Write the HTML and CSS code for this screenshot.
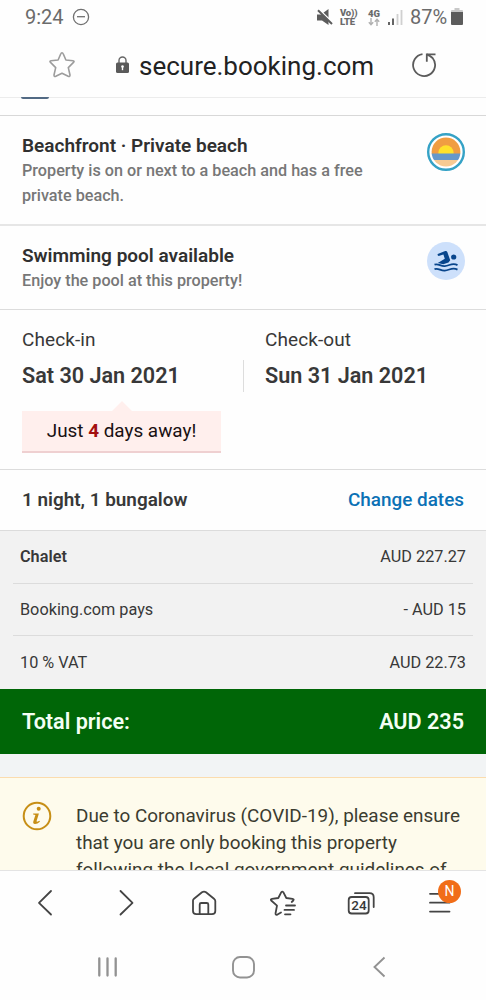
FILE: index.html
```html
<!DOCTYPE html>
<html lang="en">
<head>
<meta charset="utf-8">
<meta name="viewport" content="width=device-width">
<title>secure.booking.com</title>
<link rel="stylesheet" href="styles.css">
</head>
<body>
<div class="phone">
  <header class="status">
    <span class="clock">9:24</span>
    <svg class="dnd" width="18" height="18" viewBox="0 0 18 18" fill="none" stroke="#707070" stroke-width="1.3"><circle cx="9" cy="9" r="7.6"/><path d="M5 8.7h8"/></svg>
    <svg class="mute" width="16" height="17" viewBox="0 0 16 17" fill="#5c5c5c"><path d="M0 5.5h4L11.5 0v16L5 11.5H0z"/><path d="M2.200.6 15.800 13.600" stroke="#fff" stroke-width="1.500"/><path d="M1 1.2 15 15" stroke="#5c5c5c" stroke-width="2"/></svg>
    <span class="stack volte"><b>Vo))</b><b>LTE</b></span>
    <span class="stack net"><b>4G</b><svg width="12" height="8" viewBox="0 0 12 8" fill="none" stroke="#b0b0b0" stroke-width="1.4"><path d="M3 0v6.5M.8 4.3 3 6.7l2.2-2.4M9 8V1.5M6.8 3.7 9 1.3l2.2 2.4"/></svg></span>
    <svg class="signal" width="15" height="16" viewBox="0 0 15 16"><path d="M1 13v3M5 9.500v6.500" stroke="#555" stroke-width="1.800"/><path d="M9.500 5v11M13.500 1v15" stroke="#d0d0d0" stroke-width="1.800"/></svg>
    <span class="percent">87%</span>
    <svg class="battery" width="12" height="17" viewBox="0 0 12 17"><path fill="#c8c8c8" d="M3.500 0h5v2H11q1 0 1 1v2H0V3q0-1 1-1h2.500z"/><path fill="#5c5c5c" d="M0 4h12v12q0 1-1 1H1q-1 0-1-1z"/></svg>
  </header>

  <div class="address">
    <svg class="star" width="28" height="28" viewBox="0 0 28 28" fill="none" stroke="#9c9c9c" stroke-width="1.600" stroke-linejoin="round"><path d="M14 1.800Q14.800 1.800 15.200 2.800L17.900 9 25 9.700Q26.800 10.100 25.500 11.400L20.300 16.600 22 24Q22 26 20.200 25.200L14 22.200 7.800 25.200Q6 26 6 24L7.700 16.600 2.500 11.400Q1.200 10.100 3 9.700L10.100 9 12.800 2.800Q13.200 1.800 14 1.800z"/></svg>
    <svg class="lock" width="13" height="17" viewBox="0 0 13 17"><path d="M3 8V4.500a3.500 3.500 0 0 1 7 0V8" fill="none" stroke="#666" stroke-width="1.400"/><rect y="6.500" width="13" height="10.500" rx="1.500" fill="#5a5a5a"/><path d="M6.500 10v4.200" stroke="#fff" stroke-width="1.400"/><circle cx="6.500" cy="10.500" r="1.300" fill="#fff"/></svg>
    <span class="url">secure.booking.com</span>
    <svg class="reload" width="26" height="26" viewBox="0 0 26 26" fill="none" stroke="#5b5b5b" stroke-width="1.800"><path d="M10.500 2.100A11 11 0 1 0 20.600 6Q18 3.500 14.700 2.300"/><path d="M23.500 2.300H14.800V9.800"/></svg>
  </div>

  <main class="page">
    <div class="peek"><i class="peek-edge"></i></div>
    <section class="perk beach">
      <div><h2>Beachfront · Private beach</h2><p>Property is on or next to a beach and has a free<br>private beach.</p></div>
      <svg width="38" height="38" viewBox="0 0 38 38"><circle cx="19" cy="19" r="17.800" fill="#fff" stroke="#35a2c6" stroke-width="2.400"/><clipPath id="sun"><circle cx="19" cy="19" r="14.400"/></clipPath><g clip-path="url(#sun)"><path fill="#f09d42" d="M0 0h38v21H0z"/><circle cx="19" cy="20" r="7.700" fill="#ffe12b"/><path fill="#6598cb" d="M0 20.500h38v6.500H0z"/><path fill="#f6ca93" d="M0 27h38v11H0z"/></g></svg>
    </section>
    <section class="perk pool">
      <div><h2>Swimming pool available</h2><p>Enjoy the pool at this property!</p></div>
      <svg width="38" height="38" viewBox="0 0 38 38"><circle cx="19" cy="19" r="19" fill="#cde0fb"/><g fill="#08458c"><circle cx="26.700" cy="15" r="2.600"/><path d="M10.700 12 18.200 9Q19.700 8.500 20.300 10L23.200 18.200 21.500 20.500 16.200 22.200 10.800 21 17.800 16.800 16.400 12.400 11.700 14Q10.200 13.500 10.700 12z"/></g><path d="M7.500 22.700c4-1.500 6 1.800 10.300 1.400 5-.5 7.500-3.600 12.700-1M7.500 27.200c4-1.500 6 1.800 10.300 1.400 5-.5 7.500-3.600 12.700-1" fill="none" stroke="#08458c" stroke-width="1.800"/></svg>
    </section>

    <section class="dates">
      <div class="date"><span class="label">Check-in</span><strong>Sat 30 Jan 2021</strong><div class="soon">Just <b>4</b> days away!</div></div>
      <div class="date out-col"><span class="label">Check-out</span><strong>Sun 31 Jan 2021</strong></div>
    </section>
    <section class="stay"><b class="nights">1 night, 1 bungalow</b><a class="change">Change dates</a></section>

    <section class="prices">
      <div class="price"><b class="chalet">Chalet</b><span>AUD 227.27</span></div>
      <div class="price"><span>Booking.com pays</span><span>- AUD 15</span></div>
      <div class="price"><span>10 % VAT</span><span>AUD 22.73</span></div>
    </section>
    <section class="total"><span>Total price:</span><span>AUD 235</span></section>
    <section class="notice">
      <svg width="30" height="30" viewBox="0 0 30 30"><circle cx="15" cy="15" r="13.300" fill="none" stroke="#c78f16" stroke-width="2"/><circle cx="16.700" cy="7.800" r="2" fill="#c78f16"/><path d="M11.200 12.500h5.700L14.600 20q-.2 1 .7.800l2.200-1 .4.900q-2.600 2.400-5 2.300-2.200-.2-1.600-2.500l2.100-6.600-2.300-.4z" fill="#c78f16"/></svg>
      <p>Due to Coronavirus (COVID-19), please ensure<br>that you are only booking this property<br>following the local government guidelines of</p>
    </section>
  </main>

  <nav class="toolbar">
    <svg width="486" height="65" viewBox="0 0 486 65" fill="none" stroke="#444" stroke-width="1.800" stroke-linecap="round" stroke-linejoin="round">
      <path d="M51 20 39 31.800 51 43.500M120.500 20l12 11.800-12 11.700"/>
      <path d="M193 29.500Q193 28.500 194 27.700L202 21.300Q204 20 206 21.300L214 27.700Q215.300 28.700 215.300 30V40Q215.300 43.200 212 43.200H196.300Q193 43.200 193 40zM199.700 42.500V33.500Q199.700 32 201.200 32H206.700Q208.300 32 208.300 33.500V42.500"/>
      <path d="M277.500 43.500 281 41.500M277 43.800Q275.200 44 275.600 42L277 34.700 271.200 29.500Q270.200 28.200 272 27.800L278.300 27 281.300 21.200Q282.300 19.900 283.300 21.200L286.300 27 292.500 27.800Q294.400 28.200 293.300 29.500L291.700 31M286 34.500h9M284.500 38.900h9.500M285 43.300h5.500"/>
      <rect x="348.700" y="26" width="20" height="16.500" rx="3"/><path d="M355 22.200h14.500Q373.700 22.200 373.700 26.200V36"/>
      <path d="M430 22.800h19M430 31.700h19.500M430 40.600h19.500"/>
    </svg>
    <span class="tabs">24</span><span class="badge">N</span>
  </nav>
  <nav class="system">
    <svg width="486" height="64" viewBox="0 0 486 64" fill="none" stroke="#929292" stroke-width="1.900"><path stroke-width="2.300" stroke-linecap="round" d="M99.300 22.500v17M107.500 22.500v17M115.700 22.500v17"/><rect x="233" y="21" width="21" height="20.500" rx="7"/><path d="M384.500 21.500 374.500 31 384.500 40.500"/></svg>
  </nav>
</div>
</body>
</html>
```
FILE: styles.css
```css
* { box-sizing: border-box; }
body { margin: 0; background: #fff; font-family: Roboto, "Liberation Sans", sans-serif; color: #383838; }
.phone { width: 486px; height: 1000px; overflow: hidden; display: flex; flex-direction: column; background: #fefefe; }
svg { display: block; flex: none; }
h2, p { margin: 0; }
h2, p, span, b, strong, a { white-space: nowrap; }

.status { height: 34px; flex: none; display: flex; align-items: center; padding-left: 25px; color: #6b6b6b; }
.clock { font-size: 20px; width: 47px; }
.mute { margin-left: 227px; }
.stack { display: flex; flex-direction: column; font-size: 9.5px; line-height: 9px; font-weight: 600; }
.volte { margin-left: 7px; width: 18px; letter-spacing: -0.2px; }
.net { margin-left: 9px; width: 14px; align-items: center; }
.signal { margin-left: 7px; }
.percent { font-size: 20px; width: 41px; margin-left: 7px; }
.battery { margin-bottom: 2px; }

.address { height: 64px; flex: none; display: flex; align-items: center; padding-left: 48px; border-bottom: 1px solid #ececec; }
.lock { margin-left: 40px; margin-bottom: 2px; }
.url { margin-left: 10px; font-size: 26px; color: #222; width: 235px; }
.reload { margin-left: 38px; margin-top: -2px; }
.star { margin-bottom: 2px; }

.page { height: 773px; margin-top: -1px; flex: none; overflow: hidden; }
.peek { height: 19px; border-bottom: 1px solid #d8d8d8; }
.peek-edge { display: block; width: 28px; height: 2px; margin-left: 21px; background: #526a84; border-radius: 0 0 2px 2px; }
.perk { display: flex; justify-content: space-between; padding: 17px 21px 0 22px; }
.perk h2 { font-size: 19px; line-height: 25px; font-weight: 600; color: #303030; }
.perk p { font-size: 16.2px; line-height: 25px; font-weight: 500; color: #777; }
.beach { height: 110px; border-bottom: 2px solid #e6e6e6; }
.beach p { margin-top: 1px; line-height: 24.5px; }
.pool { height: 84px; border-bottom: 1px solid #dcdcdc; }
.pool svg { margin-top: -1px; }

.dates { height: 160px; display: grid; grid-template-columns: 243px 243px; padding-top: 18px; border-bottom: 1px solid #dcdcdc; }
.date { display: flex; flex-direction: column; align-items: flex-start; padding-left: 22px; }
.label { font-size: 19px; line-height: 24px; letter-spacing: 0.1px; }
.date strong { font-size: 21.6px; line-height: 28px; margin-top: 10px; font-weight: 600; }
.out-col { background: linear-gradient(#ddd, #ddd) 0 32px / 1px 32px no-repeat; }
.soon { position: relative; width: 199px; height: 42px; margin-top: 21px; background: #ffefed; border-bottom: 2px solid #efd0d1; text-align: center; line-height: 40px; font-size: 18.9px; color: #191012; }
.soon::before { content: ""; position: absolute; left: 90px; top: -10px; border: 10px solid transparent; border-top: 0; border-bottom-color: #ffefed; }
.soon b { color: #a30f0f; }

.stay { height: 61px; display: flex; justify-content: space-between; align-items: center; padding: 0 22px 2px; font-size: 18.9px; border-bottom: 1px solid #dcdcdc; }
.nights { font-weight: 600; }
.change { color: #0b71b5; font-weight: 500; }

.prices { height: 158px; background: #f2f2f2; padding: 0 13px; }
.price { height: 52.6px; display: flex; justify-content: space-between; align-items: center; padding: 0 7px; font-size: 16.25px; border-bottom: 1px solid #dcdcdc; }
.price:last-child { border: 0; }
.chalet { font-weight: 600; }
.total { height: 65px; display: flex; align-items: center; justify-content: space-between; padding: 0 22px; font-size: 21.6px; font-weight: 600; color: #f4fff4; background: #006607; }
.notice { margin-top: 23px; padding-top: 23px; height: 200px; display: flex; border-top: 1px solid #fbdcae; padding-left: 22px; background: #fefbec; box-shadow: 0 -23px #f2f4f5; }
.notice p { margin: 1px 0 0 24px; font-size: 18.9px; line-height: 27px; color: #3b3c30; }

.toolbar { position: relative; height: 66px; flex: none; border-top: 1px solid #e4e4e4; }
.tabs { position: absolute; left: 349px; top: 26px; width: 20px; text-align: center; font-size: 13.5px; line-height: 16px; font-weight: 500; }
.badge { position: absolute; left: 438px; top: 9px; width: 23px; height: 23px; border-radius: 50%; background: #f16d18; color: #fff; font-size: 14px; line-height: 23px; text-align: center; }
.system { height: 64px; flex: none; }
```
